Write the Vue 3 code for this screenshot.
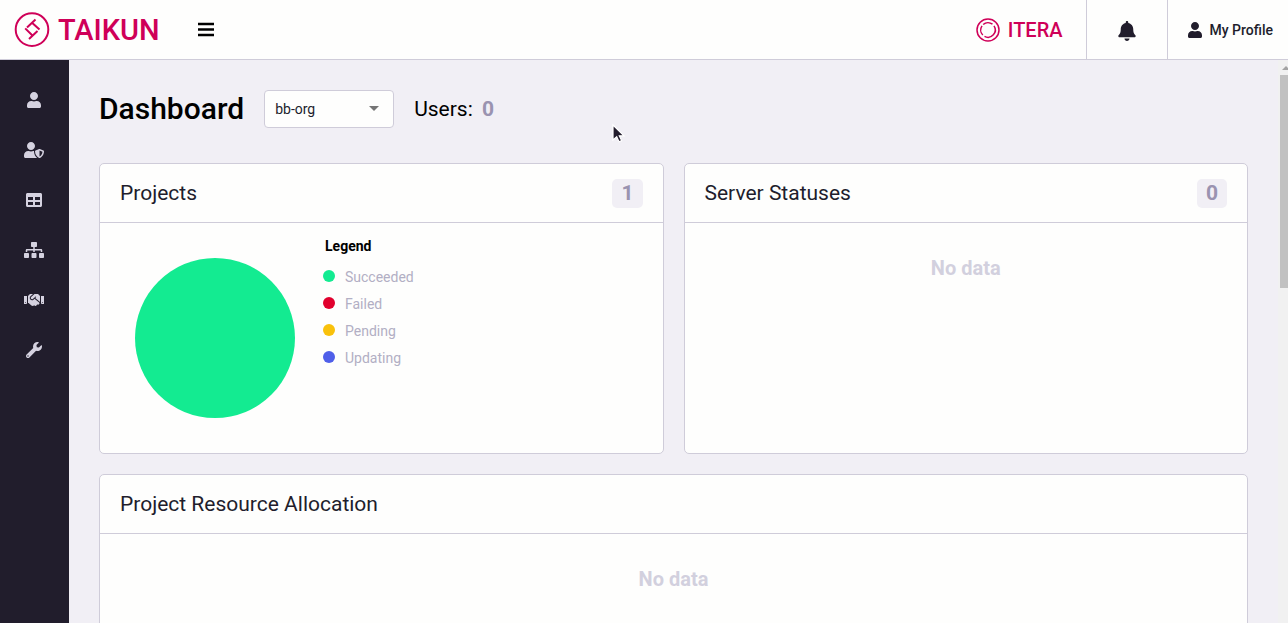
<script setup>
const nav = [
  { label: 'Users', w: 448, d: 'M224 256c70.7 0 128-57.3 128-128S294.7 0 224 0 96 57.3 96 128s57.3 128 128 128zm89.6 32h-16.7c-22.2 10.2-46.9 16-72.9 16s-50.6-5.8-72.9-16h-16.7C60.2 288 0 348.2 0 422.4V464c0 26.5 21.5 48 48 48h352c26.5 0 48-21.5 48-48v-41.6c0-74.2-60.2-134.4-134.4-134.4z' },
  { label: 'Access', w: 640, d: 'M622.3 271.1l-115.2-45c-4.1-1.6-12.6-3.7-22.2 0l-115.2 45c-10.7 4.2-17.7 14-17.7 24.9 0 111.6 68.7 188.8 132.9 213.9 9.6 3.7 18 1.6 22.2 0C558.4 489.9 640 420.5 640 296c0-10.9-7-20.7-17.7-24.9zM496 462.4V273.3l95.5 37.3c-5.6 87.1-60.9 135.4-95.5 151.8zM224 256c70.7 0 128-57.3 128-128S294.7 0 224 0 96 57.3 96 128s57.3 128 128 128zm96 40c0-2.5.8-4.8 1.1-7.2-2.5-.1-4.9-.8-7.5-.8h-16.7c-22.2 10.2-46.9 16-72.9 16s-50.6-5.8-72.9-16h-16.7C60.2 288 0 348.2 0 422.4V464c0 26.5 21.5 48 48 48h352c6.8 0 13.3-1.5 19.2-4-54-42.9-99.2-116.7-99.2-212z' },
  { label: 'Projects', w: 512, d: 'M464 32H48C21.49 32 0 53.49 0 80v352c0 26.51 21.49 48 48 48h416c26.51 0 48-21.49 48-48V80c0-26.51-21.49-48-48-48zM224 416H64v-96h160v96zm0-160H64v-96h160v96zm224 160H288v-96h160v96zm0-160H288v-96h160v96z' },
  { label: 'Organizations', w: 640, d: 'M128 352H32c-17.67 0-32 14.33-32 32v96c0 17.67 14.33 32 32 32h96c17.67 0 32-14.33 32-32v-96c0-17.67-14.33-32-32-32zm-24-80h192v48h48v-48h192v48h48v-57.59c0-21.17-17.23-38.41-38.41-38.41H344v-64h40c17.67 0 32-14.33 32-32V32c0-17.67-14.33-32-32-32H256c-17.67 0-32 14.33-32 32v96c0 17.67 14.33 32 32 32h40v64H94.41C73.23 224 56 241.23 56 262.41V320h48v-48zm264 80h-96c-17.67 0-32 14.33-32 32v96c0 17.67 14.33 32 32 32h96c17.67 0 32-14.33 32-32v-96c0-17.67-14.33-32-32-32zm240 0h-96c-17.67 0-32 14.33-32 32v96c0 17.67 14.33 32 32 32h96c17.67 0 32-14.33 32-32v-96c0-17.67-14.33-32-32-32z' },
  { label: 'Partners', w: 640, d: 'M434.7 64h-85.9c-8 0-15.7 3-21.6 8.4l-98.3 90c-.1.1-.2.3-.3.4-16.6 15.6-16.3 40.5-2.1 56 12.7 13.9 39.4 17.6 56.1 2.7.1-.1.3-.1.4-.2l79.9-73.2c6.5-5.9 16.7-5.5 22.6 1 6 6.5 5.5 16.6-1 22.6l-26.1 23.9L504 313.8c2.9 2.4 5.5 5 7.9 7.7V128l-54.6-54.6c-5.9-6-14.1-9.4-22.6-9.4zM544 128.2v223.9c0 17.7 14.3 32 32 32h64V128.2h-96zm48 223.9c-8.8 0-16-7.2-16-16s7.2-16 16-16 16 7.2 16 16-7.2 16-16 16zM0 384h64c17.7 0 32-14.3 32-32V128.2H0V384zm48-63.9c8.8 0 16 7.2 16 16s-7.2 16-16 16-16-7.2-16-16c0-8.9 7.2-16 16-16zm435.9 18.6L334.6 217.5l-30 27.5c-29.7 27.1-75.2 24.5-101.7-4.4-26.9-29.4-24.8-74.9 4.4-101.7L289.1 64h-83.8c-8.5 0-16.6 3.4-22.6 9.4L128 128v223.9h18.3l90.5 81.9c27.4 22.3 67.7 18.1 90-9.3l.2-.2 17.9 15.5c15.9 13 39.4 10.5 52.3-5.4l31.4-38.6 5.4 4.4c13.7 11.1 33.9 9.1 45-4.7l9.5-11.7c11.2-13.8 9.1-33.9-4.6-45.1z' },
  { label: 'Settings', w: 512, d: 'M507.73 109.1c-2.24-9.03-13.54-12.09-20.12-5.51l-74.36 74.36-67.88-11.31-11.31-67.88 74.36-74.36c6.62-6.62 3.43-17.9-5.66-20.16-47.38-11.74-99.55.91-136.58 37.93-39.64 39.64-50.55 97.1-34.05 147.2L18.74 402.76c-24.99 24.99-24.99 65.51 0 90.5 24.99 24.99 65.51 24.99 90.5 0l213.21-213.21c50.12 16.71 107.47 5.68 147.37-34.22 37.07-37.07 49.7-89.32 37.91-136.73zM64 472c-13.25 0-24-10.75-24-24 0-13.26 10.75-24 24-24s24 10.74 24 24c0 13.25-10.75 24-24 24z' },
]
const legend = [
  { name: 'Succeeded', tone: 'ok' },
  { name: 'Failed', tone: 'fail' },
  { name: 'Pending', tone: 'wait' },
  { name: 'Updating', tone: 'update' },
]
</script>

<template>
  <div class="page">
    <header class="topbar">
      <a class="brand" href="#">
        <svg width="36" height="36" viewBox="0 0 36 36" fill="none" stroke="currentColor" stroke-width="2" aria-hidden="true">
          <circle cx="18" cy="17.6" r="16.3" />
          <path d="M21.5 7.600L13 15.500M18 10.700L25.500 17.600M11.200 16.400L18.700 23.700M23.500 19.100L15 27" />
        </svg>
        <span>TAIKUN</span>
      </a>
      <button class="menu" type="button" aria-label="Toggle menu">
        <svg width="18" height="18" viewBox="0 0 18 18" aria-hidden="true"><path d="M1 3h16M1 8.500h16M1 14h16" stroke="#000" stroke-width="2.400" /></svg>
      </button>
      <a class="partner" href="#">
        <svg width="24" height="24" viewBox="0 0 24 24" fill="none" stroke="currentColor" stroke-width="1.5" aria-hidden="true">
          <circle cx="12" cy="12" r="11" />
          <path d="M7.200 6.500A7.300 7.300 0 0 1 16.500 6.200M18 7.900A7.300 7.300 0 0 1 8.500 18.400M6.800 17.100A7.300 7.300 0 0 1 6 7.900" />
        </svg>
        <span>ITERA</span>
      </a>
      <button class="bell" type="button" aria-label="Notifications">
        <svg width="18" height="20" viewBox="0 0 448 512" fill="currentColor" aria-hidden="true"><path d="M224 512c35.32 0 63.97-28.65 63.97-64H160.03c0 35.35 28.65 64 63.97 64zm215.39-149.71c-19.32-20.76-55.47-51.99-55.47-154.29 0-77.7-54.48-139.9-127.94-155.16V32c0-17.67-14.32-32-31.98-32s-31.98 14.33-31.98 32v20.84C118.56 68.1 64.08 130.3 64.08 208c0 102.3-36.15 133.53-55.47 154.29-6 6.45-8.66 14.16-8.61 21.71.11 16.4 12.98 32 32.1 32h383.8c19.12 0 32-15.6 32.1-32 .05-7.55-2.61-15.27-8.61-21.71z" /></svg>
      </button>
      <button class="profile" type="button">
        <svg width="14" height="16" viewBox="0 0 448 512" fill="currentColor" aria-hidden="true"><path :d="nav[0].d" /></svg>
        <span>My Profile</span>
      </button>
    </header>

    <div class="body">
      <nav class="sidebar">
        <a v-for="item in nav" :key="item.label" href="#" :aria-label="item.label">
          <svg height="16" :width="item.w / 32" :viewBox="`0 0 ${item.w} 512`" fill="currentColor" aria-hidden="true"><path :d="item.d" /></svg>
        </a>
      </nav>

      <main class="content">
        <div class="heading">
          <h1>Dashboard</h1>
          <div class="picker">
            <select aria-label="Organization"><option>bb-org</option></select>
            <svg width="10" height="5" viewBox="0 0 10 5" aria-hidden="true"><path d="M0 0h10L5 5z" fill="#757575" /></svg>
          </div>
          <p class="users">Users: <b>0</b></p>
        </div>

        <div class="cards">
          <section class="card">
            <header><h2>Projects</h2><span class="count">1</span></header>
            <div class="chart">
              <svg width="160" height="160" viewBox="0 0 160 160" role="img" aria-label="All projects succeeded"><circle cx="80" cy="80" r="80" fill="#13eb91" /></svg>
              <div class="legend">
                <h3>Legend</h3>
                <ul>
                  <li v-for="l in legend" :key="l.name"><i :class="l.tone"></i>{{ l.name }}</li>
                </ul>
              </div>
            </div>
          </section>
          <section class="card">
            <header><h2>Server Statuses</h2><span class="count">0</span></header>
            <p class="empty">No data</p>
          </section>
          <section class="card wide">
            <header><h2>Project Resource Allocation</h2></header>
            <p class="empty">No data</p>
          </section>
        </div>
      </main>

      <div class="scroll" aria-hidden="true">
        <svg width="8" height="15" viewBox="0 0 8 15"><path d="M2 10L6 6l4 4z" fill="#a3a3a3" /></svg>
        <div class="thumb"></div>
      </div>
    </div>

    <svg class="pointer" width="16" height="22" viewBox="0 0 16 22" aria-hidden="true">
      <path d="M2 2v15l3.700-3.200 2.300 5 2.600-1.200-2.300-4.800H13z" fill="#231d2d" stroke="#fff" stroke-width="1.200" />
    </svg>
  </div>
</template>

<style>
html, body { margin: 0; overflow: hidden; }
</style>

<style scoped>
.page {
  height: 100vh;
  display: flex;
  flex-direction: column;
  overflow: hidden;
  position: relative;
  font-family: Roboto, "Liberation Sans", sans-serif;
  color: #211d2c;
  background: #f1eff5;
}
* { box-sizing: border-box; }
h1, h2, h3, p, ul { margin: 0; padding: 0; }
button { border: 0; padding: 0; background: none; font: inherit; color: inherit; }
a { color: inherit; text-decoration: none; }
svg { display: block; flex: none; }

.topbar {
  flex: none;
  height: 60px;
  display: flex;
  align-items: stretch;
  background: #fefefd;
  border-bottom: 1px solid #cfccd9;
}
.brand, .partner { display: flex; align-items: center; color: #cf0058; }
.brand { padding-left: 14px; gap: 8px; font-size: 29px; font-weight: 500; }
.menu { margin-left: 37px; }
.partner { margin-left: auto; padding-right: 23px; gap: 8px; font-size: 20px; font-weight: 500; }
.bell {
  width: 82px;
  padding-top: 3px;
  display: flex;
  align-items: center;
  justify-content: center;
  border: solid #cfccd9;
  border-width: 0 1px;
}
.profile { display: flex; align-items: center; gap: 8px; padding: 0 15px 0 20px; font-size: 14px; font-weight: 500; }

.body { flex: 1; min-height: 0; display: flex; }
.sidebar { flex: none; width: 69px; padding: 15px 1px 0 0; background: #211d2c; color: #d5d2e0; }
.sidebar a { height: 50px; display: flex; align-items: center; justify-content: center; }

.content { flex: 1; min-width: 0; padding: 30px; overflow: hidden; }
.heading { display: flex; align-items: center; gap: 20px; margin-bottom: 35px; color: #000; }
h1 { font-size: 30px; line-height: 38px; font-weight: 500; }
.picker { position: relative; }
.picker select {
  appearance: none;
  display: block;
  width: 130px;
  height: 38px;
  padding: 0 10px;
  font: 14px Roboto, sans-serif;
  color: #211d2c;
  background: #fefefd;
  border: 1px solid #cfccd9;
  border-radius: 4px;
}
.picker svg { position: absolute; right: 15px; top: 16px; pointer-events: none; }
.users { font-size: 21px; }
.users b { margin-left: 4px; color: #9a93b0; }

.cards { display: grid; grid-template-columns: 1fr 1fr; gap: 20px; }
.card { min-height: 291px; background: #fefefd; border: 1px solid #cfccd9; border-radius: 5px; }
.wide { grid-column: 1 / -1; }
.card header {
  height: 59px;
  padding: 0 20px;
  display: flex;
  align-items: center;
  justify-content: space-between;
  border-bottom: 1px solid #cfccd9;
}
h2 { font-size: 21px; font-weight: 400; }
.count {
  padding: 0 9px;
  font-size: 21px;
  line-height: 29px;
  font-weight: 700;
  color: #9a93b0;
  background: #f1eff5;
  border-radius: 5px;
}
.empty { padding-top: 33px; text-align: center; font-size: 20px; line-height: 24px; font-weight: 700; color: #d2d0de; }

.chart { display: flex; align-items: flex-start; gap: 28px; padding: 35px; }
.legend { margin-top: -20px; }
h3 { margin-left: 2px; font-size: 14px; line-height: 16px; font-weight: 700; color: #000; }
ul { list-style: none; margin-top: 10px; }
li { display: flex; align-items: flex-start; gap: 10px; font-size: 14px; line-height: 27px; color: #b2afc4; }
li i { width: 12px; height: 12px; margin-top: 6px; border-radius: 50%; }
.ok { background: #13eb91; }
.fail { background: #e1002d; }
.wait { background: #f9c10b; }
.update { background: #4f5fe9; }

.scroll { flex: none; width: 10px; padding-left: 2px; background: #f1f1f1; }
.thumb { height: 213px; background: #c1c1c1; }
.pointer { position: absolute; left: 611px; top: 123px; }
</style>
